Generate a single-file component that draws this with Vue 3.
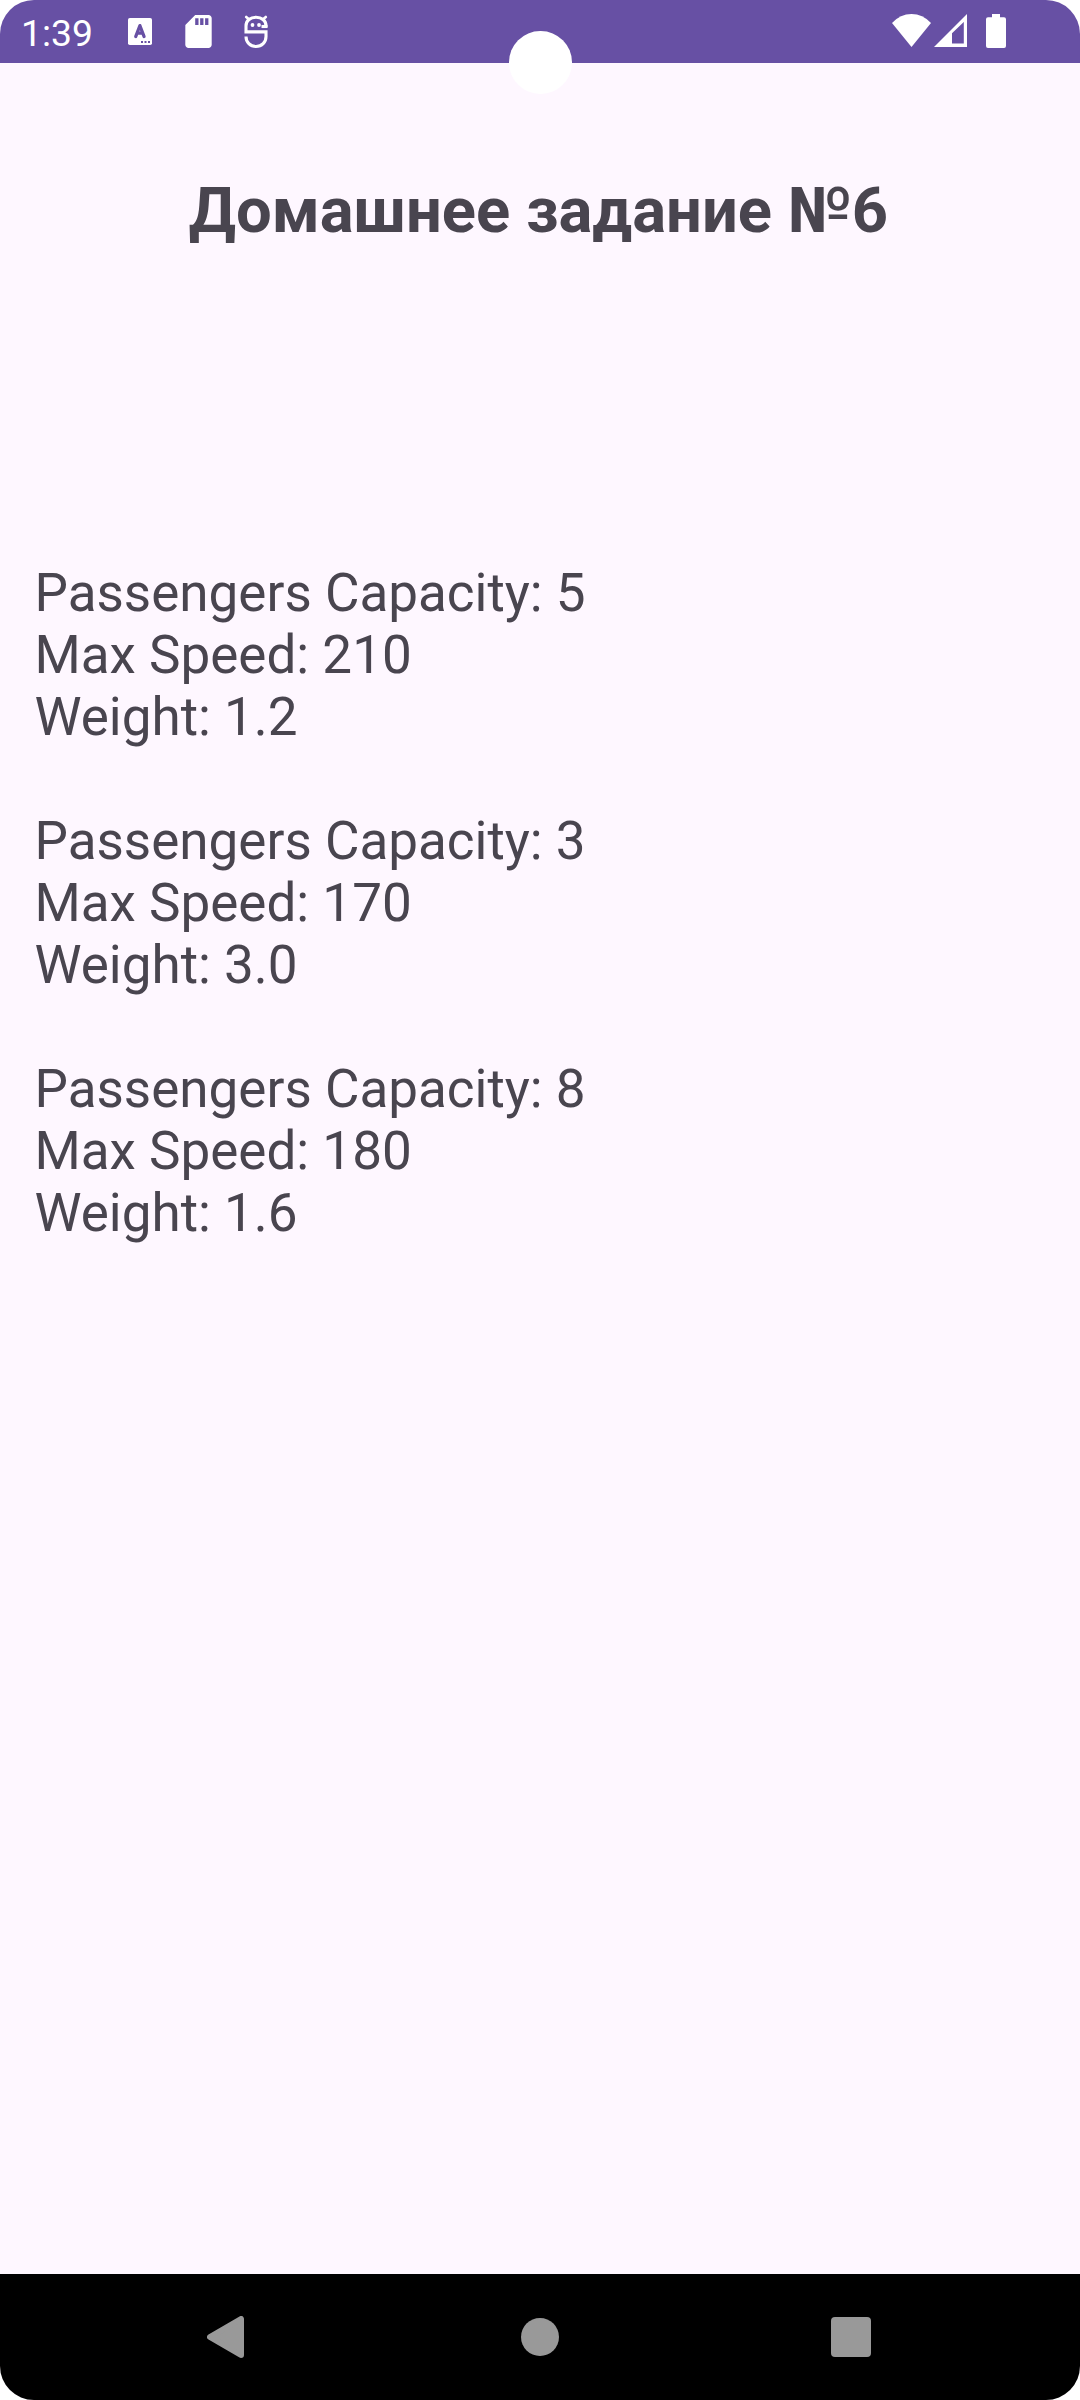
<script setup>
const vehicles = [
  { capacity: '5', speed: '210', weight: '1.2' },
  { capacity: '3', speed: '170', weight: '3.0' },
  { capacity: '8', speed: '180', weight: '1.6' },
]
</script>

<template>
  <div class="screen">
    <header class="status">
      <span class="time">1:39</span>
      <div class="notifications">
        <svg width="24" height="27" viewBox="0 0 24 27">
          <rect width="24" height="27" rx="1.8" fill="#fff" />
          <path d="M7.7 18.6 11.9 7.6 16.1 18.6M9 15.2H14.8" fill="none" stroke="#6750a4" stroke-width="3.2" stroke-linecap="round" stroke-linejoin="round" />
          <path d="M13 23h2v2h-2zM16.5 23h2v2h-2zM20 23h2v2h-2z" fill="#6750a4" />
        </svg>
        <svg class="sd" width="27" height="33" viewBox="4 2 16 20">
          <path fill="#fff" d="M18 2h-8L4.02 8 4 20c0 1.1.9 2 2 2h12c1.1 0 2-.9 2-2V4c0-1.1-.9-2-2-2zm-6 6h-2V4h2v4zm3 0h-2V4h2v4zm3 0h-2V4h2v4z" />
        </svg>
        <svg class="bug" width="24" height="34" viewBox="0 0 24 34" fill="none" stroke="#fff" stroke-width="3.1">
          <path d="M22 12.2V11C22 5.5 17.6 2.2 12 2.2S2 5.5 2 11v5.9h20v4.6C22 27.3 17.8 31.5 12 31.5S2 27.3 2 21.5" />
          <path d="M17.5 11.5h6" />
          <path d="m5.2 4.6-3-2.6M18.8 4.6l3-2.6" stroke-linecap="round" stroke-width="2.6" />
          <g fill="#fff" stroke="none"><circle cx="8.5" cy="10" r="1.9" /><circle cx="15" cy="10" r="1.9" /></g>
        </svg>
      </div>
      <div class="system">
        <svg width="39" height="33" viewBox="0 0 39 33"><path fill="#fff" d="M19.5 33 0 9Q8.3 0 19.5 0T39 9z" /></svg>
        <svg class="signal" width="33" height="33" viewBox="0 0 33 33"><path fill="#fff" fill-rule="evenodd" d="M0 33 33 0v33zM18 29.5h11.8V8L18 19.2z" /></svg>
        <svg class="battery" width="20" height="34" viewBox="0 0 20 34"><path fill="#fff" d="M6 0h8v3.3h4q2 0 2 2V32q0 2-2 2H2q-2 0-2-2V5.3q0-2 2-2h4z" /></svg>
      </div>
    </header>
    <i class="camera"></i>
    <main class="content">
      <h1>Домашнее задание №6</h1>
      <section class="list">
        <div v-for="v in vehicles" :key="v.capacity" class="vehicle">
          <p>Passengers Capacity: {{ v.capacity }}</p>
          <p>Max Speed: {{ v.speed }}</p>
          <p>Weight: {{ v.weight }}</p>
        </div>
      </section>
    </main>
    <nav class="nav">
      <svg width="37" height="42" viewBox="0 0 37 42"><path d="M3 21 34 3v36z" fill="#999" stroke="#999" stroke-width="6" stroke-linejoin="round" /></svg>
      <i class="home"></i>
      <i class="recent"></i>
    </nav>
  </div>
</template>

<style>
body {
  margin: 0;
  background: #fff;
}
</style>

<style scoped>
.screen {
  position: relative;
  display: flex;
  flex-direction: column;
  width: 1080px;
  height: 2400px;
  overflow: hidden;
  border-radius: 34px;
  background: #fef7ff;
  color: #49454f;
  font-family: Roboto, sans-serif;
}
svg {
  display: block;
  flex: none;
}
.status {
  display: flex;
  align-items: flex-start;
  height: 63px;
  box-sizing: border-box;
  padding: 0 74px 0 21px;
  background: #6750a4;
}
.time {
  width: 107px;
  padding-top: 11px;
  color: #fff;
  font-size: 37.3px;
  line-height: 44px;
}
.notifications {
  display: flex;
  align-items: center;
  height: 63px;
}
.sd {
  margin-left: 32.5px;
}
.bug {
  margin-left: 32.5px;
}
.system {
  display: flex;
  margin: 14px 0 0 auto;
}
.signal {
  margin-left: 3px;
}
.battery {
  margin-left: 19px;
}
.camera {
  position: absolute;
  left: 509px;
  top: 31px;
  width: 62.5px;
  height: 62.5px;
  border-radius: 50%;
  background: #fff;
}
.content {
  flex: 1;
}
h1 {
  margin: 110px 0 0;
  padding-right: 3px;
  text-align: center;
  font-size: 63.3px;
  line-height: 74px;
  font-weight: 700;
}
.list {
  display: flex;
  flex-direction: column;
  gap: 62px;
  margin-top: 315px;
  padding-left: 34.5px;
  font-size: 53px;
  line-height: 62px;
}
p {
  margin: 0;
}
.nav {
  display: flex;
  align-items: center;
  height: 126px;
  padding-left: 207px;
  background: #000;
}
.home {
  width: 38px;
  height: 38px;
  margin-left: 277px;
  border-radius: 50%;
  background: #999;
}
.recent {
  width: 40px;
  height: 40px;
  margin-left: 272px;
  border-radius: 4px;
  background: #999;
}
</style>
